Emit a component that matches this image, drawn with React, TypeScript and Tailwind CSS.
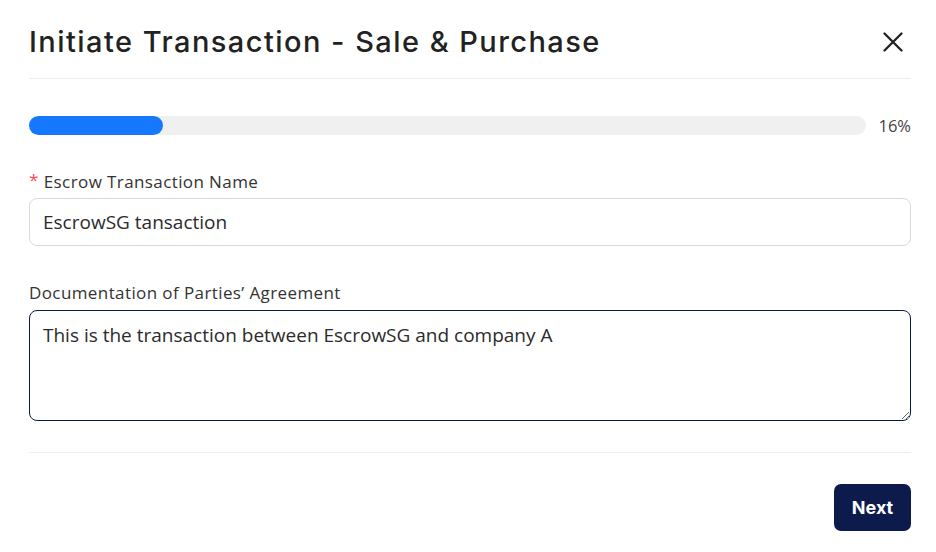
import React, { useState } from "react";

export default function App() {
  const [name, setName] = useState("EscrowSG tansaction");
  const [doc, setDoc] = useState("This is the transaction between EscrowSG and company A");
  const progress = 16;

  return (
    <div className="min-h-screen w-full bg-white pl-[29px] pr-[25px] font-['Open_Sans',sans-serif]">
      {/* header */}
      <div className="flex h-[79px] items-center justify-between border-b border-[#efefef] pt-[5px]">
        <h1 className="font-['Inter',sans-serif] text-[29px] font-medium tracking-[1.45px] text-[#222]">
          Initiate Transaction - Sale &amp; Purchase
        </h1>
        <button className="mr-[8px] flex h-[20px] w-[20px] items-center justify-center text-[#222]">
          <svg width="20" height="20" viewBox="0 0 20 20" fill="none" stroke="currentColor" strokeWidth="2.3" strokeLinecap="round">
            <path d="M1.5 1.5 L18.5 18.5 M18.5 1.5 L1.5 18.5" />
          </svg>
        </button>
      </div>

      {/* progress */}
      <div className="mt-[37px] flex h-[19px] items-center gap-[12px]">
        <div className="h-[19px] flex-1 rounded-full bg-[#f0f0f0]">
          <div className="h-full rounded-full bg-[#1677ff]" style={{ width: `${progress}%` }} />
        </div>
        <span className="text-[16.5px] leading-[19px] text-[#444]">{progress}%</span>
      </div>

      {/* name field */}
      <div className="mt-[36px]">
        <label className="flex items-center text-[17px] leading-[22px] tracking-[0.4px] text-[#333]">
          <span className="mr-[5px] mt-[-5px] text-[#ff4d4f]">*</span>
          Escrow Transaction Name
        </label>
        <input
          value={name}
          onChange={(e) => setName(e.target.value)}
          className="mt-[5px] block h-[48px] w-full rounded-[8px] border border-[#d9d9d9] pl-[13px] pr-[14px] text-[19px] text-[#2b2b2b] outline-none"
        />
      </div>

      {/* doc field */}
      <div className="mt-[36px]">
        <label className="block text-[17px] leading-[22px] tracking-[0.4px] text-[#333]">
          Documentation of Parties’ Agreement
        </label>
        <textarea
          value={doc}
          spellCheck={false}
          onChange={(e) => setDoc(e.target.value)}
          className="mt-[6px] block h-[111px] w-full rounded-[8px] border border-[#0b1a4a] pl-[13px] pr-[14px] pt-[11px] text-[19px] leading-[26px] text-[#2b2b2b] outline-none"
        />
      </div>

      <div className="mt-[31px] border-t border-[#efefef]" />

      <div className="mt-[31px] flex justify-end">
        <button className="h-[47px] w-[77px] rounded-[7px] bg-[#0d1b4c] font-['Inter',sans-serif] text-[18px] font-bold text-white">
          Next
        </button>
      </div>
    </div>
  );
}
